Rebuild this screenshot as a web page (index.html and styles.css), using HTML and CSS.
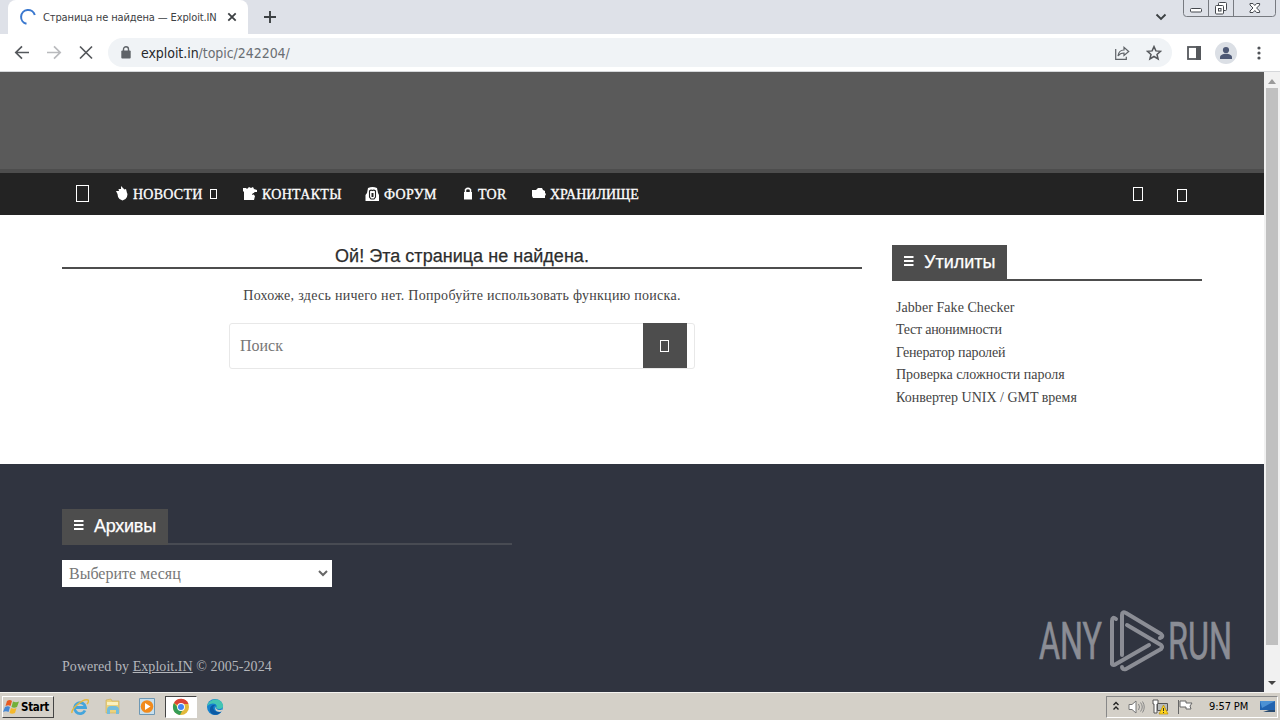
FILE: index.html
```html
<!DOCTYPE html>
<html lang="ru">
<head>
<meta charset="utf-8">
<title>Страница не найдена — Exploit.IN</title>
<link rel="stylesheet" href="styles.css">
</head>
<body>
<div class="screen">
  <div class="tabstrip">
    <div class="tab">
      <svg class="spinner" width="18" height="18" viewBox="0 0 18 18"><path d="M7.500 15.800A7 7 0 1 1 15.800 7" fill="none" stroke="#3a78cf" stroke-width="2"/></svg>
      <span class="tab-title">Страница не найдена — Exploit.IN</span>
      <svg class="tab-close" width="10" height="10" viewBox="0 0 10 10"><path d="M1.300 1.300l7.400 7.400M8.700 1.300L1.300 8.700" stroke="#3c4043" stroke-width="1.800"/></svg>
    </div>
    <svg class="newtab" width="14" height="14" viewBox="0 0 14 14"><path d="M7 1v12M1 7h12" stroke="#3c4043" stroke-width="1.900"/></svg>
    <svg class="chev" width="12" height="8" viewBox="0 0 12 8"><path d="M1.500 1.500L6 6l4.500-4.500" fill="none" stroke="#3c4043" stroke-width="1.900"/></svg>
    <svg class="winctl" width="94" height="18" viewBox="0 0 94 18" fill="none" stroke="#777a80">
      <path d="M.5 0v13.500q0 3 3 3h86q3 0 3-3V0M25.500 0v16M50.500 0v16"/>
      <g stroke="#45484e"><rect x="7.500" y="8.500" width="11" height="3.500" rx="1" fill="#fff"/>
      <rect x="35.500" y="2.500" width="8" height="8" rx="1" fill="#fff"/><rect x="32.500" y="5.500" width="8" height="8.500" rx="1" fill="#fff"/><rect x="35.500" y="8.500" width="2.500" height="2.500"/>
      <path d="M67 3.500h3l1.800 2 1.800-2h3V5l-3 3 3 3v1.500h-3l-1.800-2-1.800 2h-3V11l3-3-3-3z" fill="#fff"/></g>
    </svg>
  </div>
  <div class="toolbar">
    <svg class="nav-ic" width="84" height="20" viewBox="0 0 84 20" fill="none" stroke="#55585c" stroke-width="1.700">
      <path d="M15 9.500H2M8 3.300L1.800 9.500 8 15.700"/>
      <path d="M33 9.500h13M40 3.300L46.200 9.500 40 15.700" stroke="#b9babd"/>
      <path d="M66 3.500l12 12M78 3.500L66 15.500"/>
    </svg>
    <div class="omnibox">
      <svg width="10" height="13" viewBox="0 0 10 13"><rect x=".3" y="4.500" width="9.400" height="8" rx="1" fill="#5f6368"/><path d="M2.500 5V3.200a2.500 2.500 0 0 1 5 0V5" fill="none" stroke="#5f6368" stroke-width="1.400"/></svg>
      <span class="url"><b>exploit.in</b>/topic/242204/</span>
      <svg class="share" width="16" height="16" viewBox="0 0 16 16" fill="none" stroke="#5f6368" stroke-width="1.200"><path d="M1.700 4v10.300h10.600v-2.500"/><path d="M4 11c.5-4 3-6 6-6V2.300L14.700 6.500 10 10.400V8c-2.500 0-4.500.8-6 3z"/></svg>
      <svg class="star" width="16" height="16" viewBox="0 0 16 16" fill="none" stroke="#55585c" stroke-width="1.500"><path d="M8 1.600l1.900 4.300 4.600.4-3.500 3.100 1.100 4.600L8 11.500 3.900 14 5 9.400 1.500 6.300l4.600-.4z"/></svg>
    </div>
    <svg class="panel" width="14" height="14" viewBox="0 0 14 14"><rect x="1" y="1" width="12" height="12" fill="#fff" stroke="#55585c" stroke-width="1.800"/><path d="M9 0h5v14H9z" fill="#55585c"/></svg>
    <svg class="avatar" width="22" height="22" viewBox="0 0 22 22"><circle cx="11" cy="11" r="11" fill="#dbdfe5"/><circle cx="11" cy="8" r="3.100" fill="#4d5875"/><path d="M5 17v-1.500c0-5 12-5 12 0V17z" fill="#4d5875"/></svg>
    <svg class="dots" width="4" height="14" viewBox="0 0 4 14" fill="#505358"><circle cx="2" cy="2" r="1.600"/><circle cx="2" cy="7" r="1.600"/><circle cx="2" cy="12" r="1.600"/></svg>
  </div>
  <div class="viewport">
    <div class="page">
      <header class="banner"></header>
      <nav class="menu">
        <i class="tofu home"></i>
        <svg class="m-ic flame" width="12" height="15" viewBox="0 0 12 15"><path d="M5 0l3.500 3.500L10 3l1 4 .5 1q0 3-2 5l-3 1.500-3-1.500q-2-2-2-5L0 5h3l-.5-2L5 3z" fill="#fff"/></svg>
        <span class="m m1">НОВОСТИ</span><i class="tofu drop"></i>
        <svg class="m-ic mail" width="15" height="13" viewBox="0 0 15 13"><path d="M0 1h3l1 1 2-2 2 1 2-1 1 2 3 1v2h-2l-2 2 2 2-1 4H1V5L0 4z" fill="#fff"/><path d="M12.500 5.500L9 7.500" stroke="#222" fill="none"/></svg>
        <span class="m m2">КОНТАКТЫ</span>
        <svg class="m-ic user" width="15" height="14" viewBox="0 0 15 14"><path d="M3 1q4.500-2 9 0l1 5 1 2v6H.5V8L2 6z" fill="#fff"/><path d="M4.500 6V4Q6 2.500 7.300 3.500 9 2.500 10.500 4v6l-1.500 2H6l-1.500-2z" fill="none" stroke="#222" stroke-width="1.100"/><path d="M6.500 6h2v4h-2z" fill="#222"/></svg>
        <span class="m m3">ФОРУМ</span>
        <svg class="m-ic lock" width="10" height="13" viewBox="0 0 10 13"><path d="M1 5h8v7.500H1z" fill="#fff"/><path d="M2.500 5V2.500Q5 .2 7.500 2.500V5" fill="none" stroke="#fff" stroke-width="1.500"/></svg>
        <span class="m m4">TOR</span>
        <svg class="m-ic cloud" width="14" height="11" viewBox="0 0 14 11"><path d="M0 2h4l2-2h4l1 2 2 1v2l1 1-1 2v2H1l-1-2z" fill="#fff"/></svg>
        <span class="m m5">ХРАНИЛИЩЕ</span>
        <i class="tofu rnd"></i><i class="tofu srch"></i>
      </nav>
      <div class="content">
        <main class="main">
          <h1>Ой! Эта страница не найдена.</h1>
          <p class="msg">Похоже, здесь ничего нет. Попробуйте использовать функцию поиска.</p>
          <div class="search"><span>Поиск</span><div class="go"><i class="tofu"></i></div></div>
        </main>
        <aside class="side">
          <div class="wt"><h3 class="util"><svg width="10" height="11" viewBox="0 0 10 11"><path d="M0 1h9.500M0 5h9.500M0 9h9.500" stroke="#fff" stroke-width="2"/></svg><span>Утилиты</span></h3></div>
          <ul>
            <li class="l1">Jabber Fake Checker</li><li class="l2">Тест анонимности</li><li class="l3">Генератор паролей</li><li class="l4">Проверка сложности пароля</li><li class="l5">Конвертер UNIX / GMT время</li>
          </ul>
        </aside>
      </div>
      <footer class="footer">
        <div class="wt dark"><h3 class="arch"><svg width="10" height="11" viewBox="0 0 10 11"><path d="M0 1h9.500M0 5h9.500M0 9h9.500" stroke="#fff" stroke-width="2"/></svg><span>Архивы</span></h3></div>
        <div class="select"><span>Выберите месяц</span><svg width="10" height="7" viewBox="0 0 10 7"><path d="M1 1l4 4 4-4" fill="none" stroke="#666" stroke-width="2"/></svg></div>
        <p class="copy">Powered by <u>Exploit.IN</u> © 2005-2024</p>
      </footer>
      <svg class="watermark" width="220" height="80" viewBox="1035 605 220 80">
        <g fill="#8b8d95" stroke="#8b8d95" stroke-width=".7" font-family="Roboto, sans-serif" font-size="52"><text x="1039" y="659" textLength="63" lengthAdjust="spacingAndGlyphs">ANY</text><text x="1168" y="659" textLength="64" lengthAdjust="spacingAndGlyphs">RUN</text></g>
        <g fill="none" stroke="#8b8d95" stroke-width="4" stroke-linejoin="round" stroke-linecap="round"><path d="M1116 619q-4-3-4 2v43q1 2 4 0l33-19"/><path d="M1122 655v-40q0-4 4-2l35 21q3 3-1 4"/><path d="M1127 625l34 20q2 2 0 4l-35 20q-4 1-4-2"/></g>
      </svg>
    </div>
    <div class="scrollbar">
      <svg width="8" height="5" viewBox="0 0 8 5"><path d="M0 5l4-5 4 5z" fill="#9a9a9a"/></svg>
      <div class="thumb"></div>
      <svg width="8" height="4" viewBox="0 0 8 4"><path d="M0 0h8L4 4z" fill="#444"/></svg>
    </div>
  </div>
  <div class="taskbar">
    <div class="start"><svg width="18" height="16" viewBox="0 0 18 16"><path d="M4 2q3-2 5 0L7.500 7q-2-1.500-5 0z" fill="#e85b22"/><path d="M10 2.500q3 1.500 6 0L14 8q-3 1.500-5.500 0z" fill="#73b03b"/><path d="M2 8q3-1.500 5 0L5.500 13Q3 11.500 0 13z" fill="#4688d4"/><path d="M8 9q3 1.500 5.500 0L12 14q-3 1.500-5.500 0z" fill="#f5b92b"/></svg><b>Start</b></div>
    <svg class="ie" width="18" height="18" viewBox="0 0 18 18" fill="none"><path d="M14 12.500a5.500 5.500 0 1 1 .5-3H5" stroke="#45a5dc" stroke-width="2.800"/><path d="M1 15C0 11 12 0 17 2c1 1 0 3-1 4" stroke="#e5b93e" stroke-width="1.500"/></svg>
    <svg class="folder" width="18" height="17" viewBox="0 0 18 17"><path d="M2 2l5-1 1 2h7v12H2z" fill="#ecd27c" stroke="#c9ab56" stroke-width=".6"/><path d="M3 4h11v3H3z" fill="#faf1bf"/><path d="M3 16v-4q0-4 4-4h4q4 0 4 4v4h-3v-4H6v4z" fill="#74bddc"/></svg>
    <svg class="media" width="16" height="17" viewBox="0 0 16 17"><path d="M.5.500h15v16H.5z" fill="#c8e0ee" stroke="#6e98b4"/><circle cx="8" cy="8.500" r="6.300" fill="#f18b1d"/><path d="M6 5l5.500 3.500L6 12z" fill="#fff"/></svg>
    <div class="active"><svg width="18" height="18" viewBox="0 0 18 18"><circle cx="9" cy="9" r="8" fill="#e2b93b"/><path d="M9 9L2 5a8 8 0 0 1 14.500 1H9z" fill="#db4437"/><path d="M2 5a8 8 0 0 0 6 12l3.500-7L6 10z" fill="#359c55"/><circle cx="9" cy="9" r="3.900" fill="#fff"/><circle cx="9" cy="9" r="3" fill="#4285f4"/></svg></div>
    <svg class="edge" width="18" height="18" viewBox="0 0 18 18"><circle cx="9" cy="9" r="8" fill="#1683ce"/><path d="M1.200 8C3 0 15-1 17 7c1 4-4 5-7 3 3-4-4-7-8.800-2z" fill="#43c5b3"/><path d="M10 7c-5 1-3 8 5 7-4 5-12 3-11-3 0-3 3-5 6-4z" fill="#0c5ba5"/><path d="M10 8.500c-1 3 3 4.500 6 3l1.500 1L14 14c-4 0-6-3-4-5.500z" fill="#d4d0c8"/></svg>
    <div class="tray">
      <svg width="8" height="12" viewBox="0 0 8 12" fill="none" stroke="#222" stroke-width="1.400"><path d="M1.500 4L4 1.500 6.500 4M1.500 8.500L4 6l2.500 2.500"/></svg>
      <svg class="vol" width="17" height="16" viewBox="0 0 17 16"><path d="M1 5.500h3L8 2v12L4 10.500H1z" fill="#fff" stroke="#777"/><path d="M10.500 5q2 3 0 6M12.500 3.500q3.500 4.500 0 9M14.500 2.500q3.500 5.500 0 11" fill="none" stroke="#888"/></svg>
      <svg class="net" width="17" height="16" viewBox="0 0 17 16"><path d="M5.500 4.500h10v7h-10z" fill="#b8bcbc" stroke="#555"/><path d="M1 1h5v4H5v9H2V5H1z" fill="#fff" stroke="#555"/><path d="M11.500 6l4.500 9H7z" fill="#ffd51d" stroke="#b98d00" stroke-width=".7"/><path d="M11.500 9v3m0 1v1" stroke="#333"/></svg>
      <svg class="flag" width="17" height="16" viewBox="0 0 17 16"><path d="M1.500 1v14M3 2h6v2h6l-2 3 1 3H9V8H3z" fill="#fff" stroke="#666"/></svg>
      <span class="clock">9:57 PM</span>
      <svg class="desk" width="16" height="13" viewBox="0 0 16 13"><path d="M0 1h15v9H0z" fill="#2163b0"/><path d="M0 1h15L2 8z" fill="#4c91d4"/><path d="M3 12h12v-2H9z" fill="#294b70"/></svg>
    </div>
  </div>
</div>
</body>
</html>
```
FILE: styles.css
```css
* { box-sizing: border-box; }
body { margin: 0; overflow: hidden; }
h1, h3, p, ul { margin: 0; padding: 0; font-weight: 400; list-style: none; }
svg { display: block; flex: none; }
span, b, li, h1, p { white-space: nowrap; }
.screen { width: 1280px; height: 720px; display: flex; flex-direction: column; background: #fff; font-family: "Liberation Serif", serif; }
.tabstrip { height: 34px; background: #dee1e8; display: flex; padding-left: 8px; }
.tab { width: 240px; height: 34px; background: #fff; border-radius: 8px 8px 0 0; display: flex; align-items: center; padding-left: 11px; }
.tab-title { font: 11px "DejaVu Sans Condensed", "DejaVu Sans", sans-serif; font-stretch: condensed; color: #3c4043; width: 184px; margin-left: 6px; letter-spacing: -0.12px; }
.newtab { margin: 10px 0 0 15px; }
.chev { margin: 13px 0 0 auto; }
.winctl { margin: 0 3px 0 16px; }
.toolbar { height: 38px; display: flex; align-items: center; border-bottom: 1px solid #d5d7da; }
.nav-ic { margin-left: 14px; }
.omnibox { margin-left: 10px; width: 1064px; height: 29px; border-radius: 15px; background: #f0f3f6; display: flex; align-items: center; padding: 0 10px 0 13px; }
.url { margin-left: 10px; font: 14px "DejaVu Sans Condensed", "DejaVu Sans", sans-serif; font-stretch: condensed; color: #6a6e73; letter-spacing: -0.05px; }
.url b { font-weight: 400; color: #26282b; }
.share { margin-left: auto; }
.star { margin-left: 16px; }
.panel { margin-left: 15px; }
.avatar { margin-left: 14px; }
.dots { margin-left: 20px; }
.viewport { height: 620px; display: flex; }
.page { width: 1264px; height: 620px; position: relative; display: flex; flex-direction: column; }
.banner { height: 101px; background: #5a5a5a; border-bottom: 4px solid #4d4d4d; }
.menu { height: 42px; background: #232323; display: flex; align-items: center; padding-left: 76px; color: #fff; font-size: 14px; }
.tofu { display: block; flex: none; border: 1px solid #fff; width: 10px; height: 12px; }
.home { width: 13px; height: 17px; margin-bottom: 1px; }
.m-ic { margin-bottom: 1px; }
.flame { margin-left: 27px; }
.m { margin-left: 5px; padding-top: 1px; -webkit-text-stroke: .3px #fff; }
.m1 { width: 70px; letter-spacing: .25px; }
.m2 { width: 80px; margin-left: 4px; letter-spacing: .3px; }
.m3 { width: 54px; margin-left: 4px; letter-spacing: .3px; }
.m4 { width: 30px; margin-left: 5px; letter-spacing: .3px; }
.m5 { width: 89px; margin-left: 4px; }
.drop { width: 7px; height: 10px; margin-left: 7px; }
.mail { margin-left: 26px; }
.user { margin-left: 23px; }
.lock { margin-left: 25px; }
.cloud { margin-left: 24px; }
.rnd { margin-left: auto; height: 14px; }
.srch { margin: 3px 77px 0 34px; height: 13px; }
.content { height: 249px; display: flex; padding: 30px 62px 0; gap: 30px; }
.main { width: 800px; display: flex; flex-direction: column; align-items: center; }
h1 { width: 800px; height: 24px; border-bottom: 2px solid #4d4d4d; text-align: center; font: 18px/22px "Liberation Sans", sans-serif; color: #2d2d2d; -webkit-text-stroke: .25px #2d2d2d; letter-spacing: .03px; }
.msg { margin-top: 17px; font-size: 14px; line-height: 20px; color: #444; letter-spacing: .29px; }
.search { margin-top: 17px; width: 466px; height: 46px; border: 1px solid #e8e8e8; border-radius: 3px; display: flex; align-items: center; justify-content: space-between; padding: 0 7px 0 10px; font-size: 16px; color: #777; }
.go { width: 44px; height: 45px; margin-bottom: 1px; background: #4d4d4d; display: flex; align-items: center; justify-content: center; }
.go .tofu { width: 9px; margin-right: 1px; }
.side { width: 310px; }
.wt { display: flex; height: 36px; border-bottom: 2px solid #4d4d4d; }
h3 { height: 36px; background: #4d4d4d; color: #fff; display: flex; align-items: center; padding: 0 0 3px 12px; font: 18px "Liberation Sans", sans-serif; -webkit-text-stroke: .25px #fff; }
h3 span { margin-left: 10px; padding-top: 2px; }
.util { width: 115px; }
.arch { width: 106px; }
.arch span { letter-spacing: -.25px; }
ul { padding: 15.700px 0 0 4px; font-size: 14px; line-height: 22.500px; color: #444; }
.l1 { letter-spacing: .06px; }
.l2 { letter-spacing: -.25px; }
.l3 { letter-spacing: -.12px; }
.footer { height: 228px; background: #303440; padding: 45px 62px 0; }
.dark { width: 450px; border-color: #484b53; }
.select { margin-top: 15px; width: 270px; height: 27px; background: #fff; display: flex; align-items: center; justify-content: space-between; padding: 0 4px 0 7px; font-size: 16px; color: #777; }
.copy { margin-top: 70px; font-size: 14px; line-height: 20px; color: #b4b6bb; letter-spacing: .06px; }
.watermark { position: absolute; left: 1035px; top: 533px; }
.scrollbar { width: 16px; background: #f1f1f1; display: flex; flex-direction: column; align-items: center; padding: 7px 0; }
.thumb { width: 12px; height: 557px; margin-top: 4px; background: #c0c0c0; }
.thumb + svg { margin-top: auto; }
.taskbar { height: 28px; background: #d4d0c8; border-top: 1px solid #f4f3f0; display: flex; align-items: center; padding-left: 2px; font: 11px "DejaVu Sans Condensed", "DejaVu Sans", sans-serif; color: #000; }
.start { width: 52px; height: 22px; margin-top: 1px; border: 1px solid; border-color: #fff #444 #444 #fff; display: flex; align-items: center; }
.start b { letter-spacing: -0.3px; font-size: 11.5px; }
.ie { margin-left: 17px; }
.folder { margin-left: 15px; }
.media { margin-left: 17px; }
.active { margin-left: 10px; width: 32px; height: 22px; background: #fff; border: 1px solid; border-color: #444 #fff #fff #444; display: flex; align-items: center; justify-content: center; }
.edge { margin-left: 9px; }
.tray { margin-left: auto; margin-right: 2px; width: 172px; height: 22px; border: 1px solid; border-color: #888 #fff #fff #888; display: flex; align-items: center; padding-left: 5px; }
.vol { margin-left: 8px; }
.net { margin-left: 7px; }
.flag { margin-left: 8px; }
.clock { margin-left: 15px; width: 41px; letter-spacing: -0.1px; }
.desk { margin-left: 10px; }
```
